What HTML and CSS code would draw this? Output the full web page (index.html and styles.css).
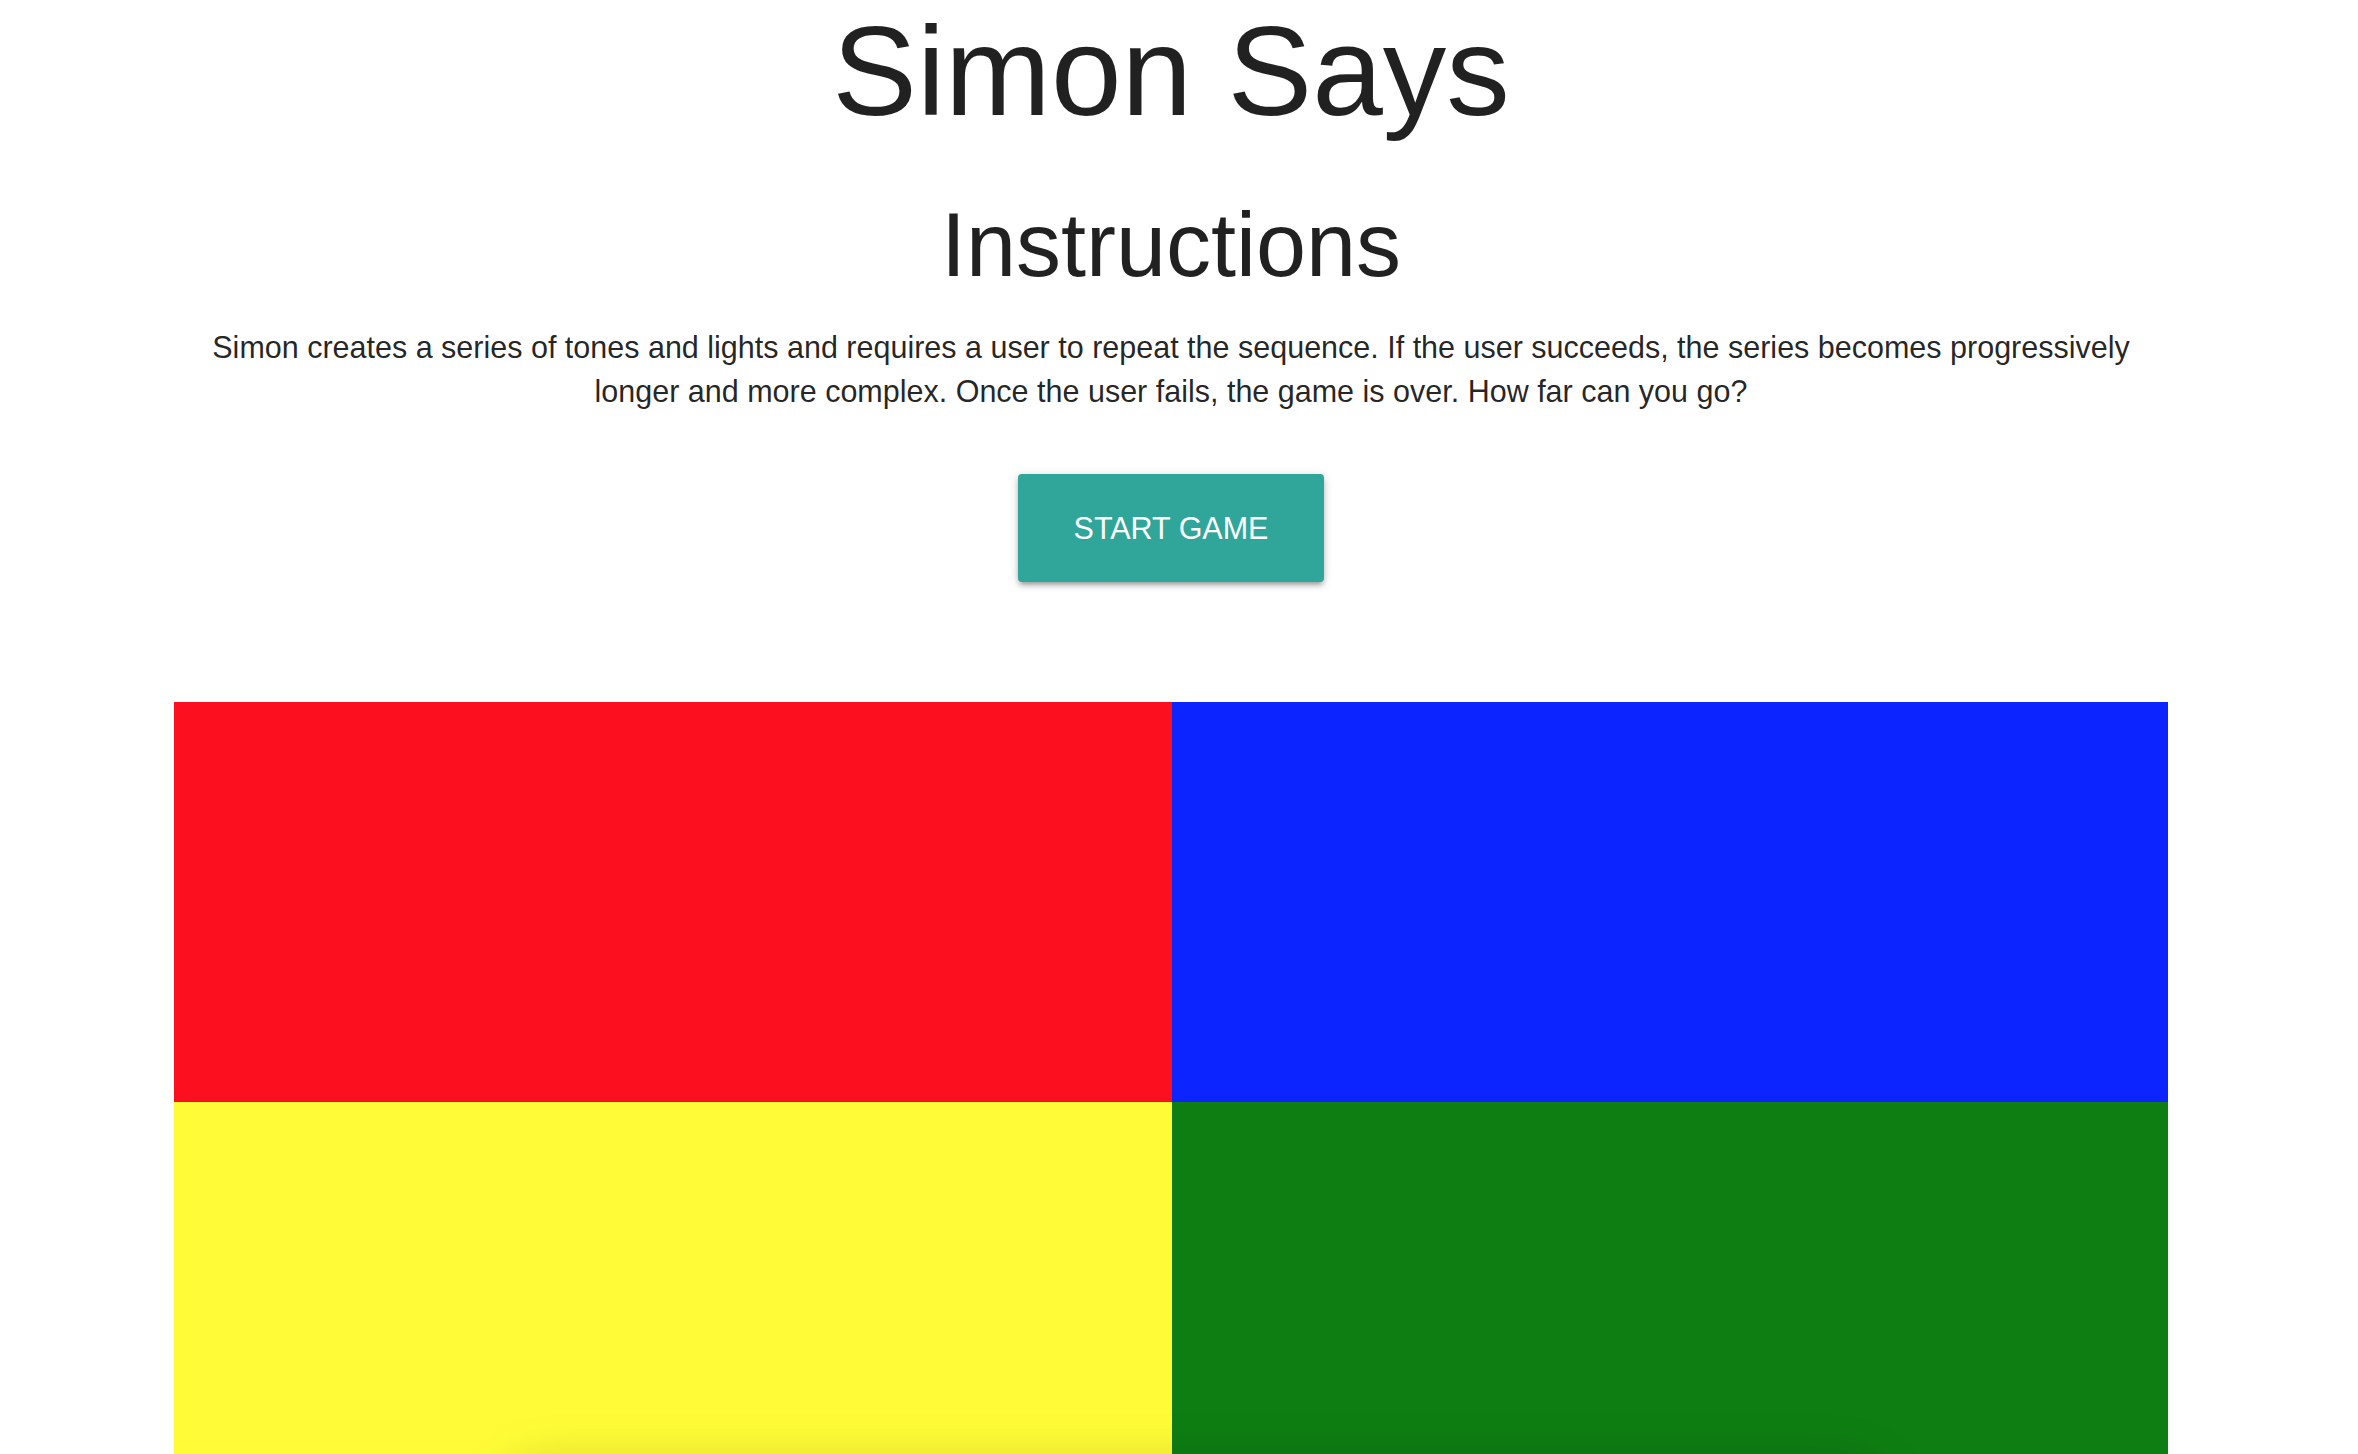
FILE: index.html
```html
<!DOCTYPE html>
<html lang="en">
<head>
<meta charset="utf-8">
<title>Simon Says</title>
<link rel="stylesheet" href="styles.css">
</head>
<body>
<div class="page">
  <div class="container">
    <h1 class="title">Simon Says</h1>
    <h2 class="subtitle">Instructions</h2>
    <p class="desc">Simon creates a series of tones and lights and requires a user to repeat the sequence. If the user succeeds, the series becomes progressively longer and more complex. Once the user fails, the game is over. How far can you go?</p>
    <div class="actions">
      <button class="btn">START GAME</button>
    </div>
    <div class="board">
      <div class="pad red"></div>
      <div class="pad blue"></div>
      <div class="pad yellow"></div>
      <div class="pad green"></div>
      <div class="under"></div>
    </div>
  </div>
</div>
</body>
</html>
```

FILE: styles.css
```css
html, body {
  margin: 0;
  padding: 0;
  background: #ffffff;
  overflow: hidden;
}
body {
  font-family: "Liberation Sans", Arial, sans-serif;
  color: rgba(0, 0, 0, 0.87);
}
.page {
  width: 2342px;
  height: 1454px;
  overflow: hidden;
}
.container {
  width: 1994px;
  margin: 0 auto;
  display: flex;
  flex-direction: column;
  align-items: center;
}
.title {
  font-weight: 400;
  font-size: 127px;
  line-height: 142px;
  margin: 0;
  text-align: center;
}
.subtitle {
  font-weight: 400;
  font-size: 90px;
  line-height: 100px;
  margin: 53px 0 0;
  text-align: center;
}
.desc {
  font-size: 30.5px;
  line-height: 44px;
  margin: 30px 0 0;
  padding: 0 22px;
  text-align: center;
}
.actions {
  margin-top: 61px;
  display: flex;
  justify-content: center;
}
.btn {
  height: 108px;
  padding: 0 56px;
  border: none;
  border-radius: 4px;
  background: #2fa699;
  color: #ffffff;
  font-family: "Liberation Sans", Arial, sans-serif;
  font-size: 30.5px;
  letter-spacing: 0;
  box-shadow: 0 4px 4px 0 rgba(0,0,0,0.14), 0 6px 2px -4px rgba(0,0,0,0.12), 0 2px 10px 0 rgba(0,0,0,0.2);
}
.board {
  position: relative;
  margin-top: 120px;
  width: 1994px;
  display: grid;
  grid-template-columns: 998px 996px;
  grid-template-rows: 400px 400px;
}
.pad { position: relative; z-index: 0; }
.red { background: #fc0f1f; }
.blue { background: #0c24ff; }
.yellow { background: #fffc37; }
.green { background: #0e7e12; }
.under {
  position: absolute;
  left: 330px;
  top: 765px;
  width: 1380px;
  height: 100px;
  border-radius: 40px;
  background: transparent;
  box-shadow: 0 0 50px 8px rgba(0,0,0,0.14);
  z-index: 1;
}
```
